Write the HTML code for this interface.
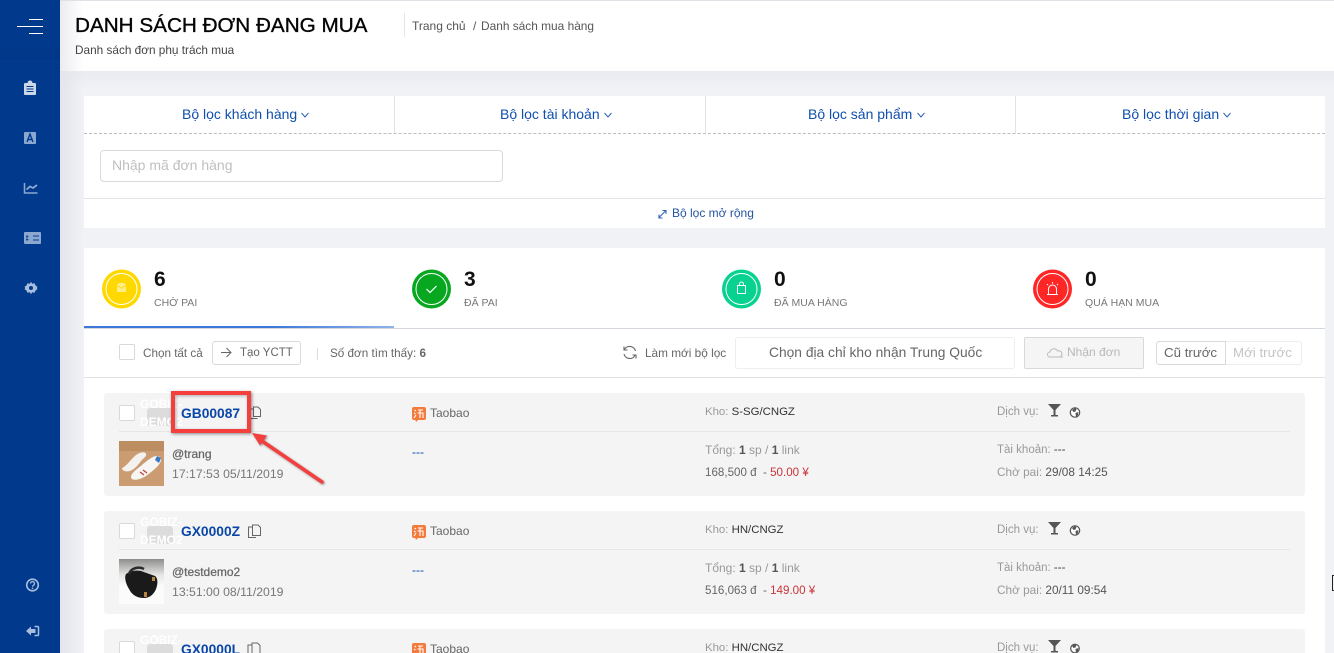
<!DOCTYPE html>
<html lang="vi"><head><meta charset="utf-8"><title>Danh sách đơn đang mua</title>
<style>
*{box-sizing:border-box}
html,body{margin:0;padding:0;width:1334px;height:653px;overflow:hidden;background:#f0f2f6;font-family:"Liberation Sans","Noto Sans CJK SC",sans-serif;font-size:12px;color:#666}
#w{position:absolute;left:0;top:0;width:1334px;height:653px;overflow:hidden;background:#f0f2f6}
.a{position:absolute;white-space:nowrap}
.box{position:absolute}
.f{color:#0f4fae;font-size:14px;text-align:center}
.lab{color:#777;font-size:10.5px}
.num{color:#111;font-size:21px;font-weight:bold}
.cb{position:absolute;width:16px;height:16px;background:#fff;border:1px solid #d9d9d9;border-radius:2px}
.card{position:absolute;left:104px;width:1201px;height:103px;background:#f4f4f4;border-radius:3px}
.code{position:absolute;color:#0a46a8;font-size:13.800px;font-weight:bold;white-space:nowrap}
.g{color:#999}.d{color:#444}
.clip{overflow:hidden}
</style></head><body><div id="w">
<div class="box" style="left:0;top:0;width:1334px;height:1px;background:#dfe1e6"></div>
<div class="box" style="left:60px;top:71px;width:1274px;height:20px;background:linear-gradient(180deg,#e9ebf0,#f0f2f6)"></div>
<div class="box" style="left:60px;top:71px;width:24px;height:582px;background:linear-gradient(90deg,#e3e5ea,rgba(240,242,246,0))"></div>
<!-- header -->
<div class="box" style="left:60px;top:1px;width:1274px;height:70px;background:#fff"></div>
<div class="box" style="left:60px;top:1px;width:24px;height:70px;background:linear-gradient(90deg,#ececef,#fff)"></div>
<div class="a" style="left:75px;top:13px;font-size:20.700px;line-height:26px;color:#050505;-webkit-text-stroke:.35px #050505">DANH SÁCH ĐƠN ĐANG MUA</div>
<div class="a" style="left:75px;top:43px;font-size:11.800px;line-height:15px;color:#444">Danh sách đơn phụ trách mua</div>
<div class="box" style="left:404px;top:13px;width:1px;height:24px;background:#e3e5ea"></div>
<div class="a" style="left:412px;top:19px;font-size:12px;line-height:15px;color:#555">Trang chủ</div>
<div class="a" style="left:473px;top:19px;font-size:12px;line-height:15px;color:#555">/</div>
<div class="a" style="left:481px;top:19px;font-size:11.900px;line-height:15px;color:#555">Danh sách mua hàng</div>
<!-- sidebar -->
<div class="box" style="left:0;top:0;width:60px;height:653px;background:#013a8d"></div>
<div class="box" style="left:0;top:40px;width:60px;height:20px;background:linear-gradient(180deg,#013a8d,#013788)"></div>
<svg class="box" style="left:0;top:0" width="60" height="653" viewBox="0 0 60 653">
<path d="M29 19.500h14M17 26.500h26M29 33.500h14" stroke="#fff" stroke-width="1" fill="none"/>
<path d="M25 83h2.500a2.500 2.500 0 0 1 5 0H35a1 1 0 0 1 1 1v10a1 1 0 0 1-1 1H25a1 1 0 0 1-1-1V84a1 1 0 0 1 1-1z" fill="#ccd8e8"/>
<path d="M26.500 86.500h7M26.500 89h7M26.500 91.500h7" stroke="#013a8d" stroke-width=".9"/>
<rect x="24" y="132" width="12" height="12" rx="1" fill="#8ca8d0"/>
<path d="M27 142l3-8 3 8M28 139.500h4" stroke="#013a8d" stroke-width="1.400" fill="none"/>
<path d="M24.500 183v10h13" stroke="#8ca8d0" stroke-width="1.500" fill="none"/>
<path d="M26.500 189.500l3.500-3 3 1.500 4-3" stroke="#8ca8d0" stroke-width="1.800" fill="none"/>
<rect x="24" y="232" width="17" height="12" rx="1" fill="#8ca8d0"/>
<path d="M33 236h6M33 240h6" stroke="#013a8d" stroke-width="1"/><path d="M27 235v6M26 236.500h2.500M26 239.500h2.500" stroke="#013a8d" stroke-width=".8"/>
<path d="M31 281.800l1.200 2 2.300-.5 1 2.200 1.900 1.200-.6 1.300.6 1.300-1.900 1.200-1 2.200-2.300-.5-1.200 2-1.200-2-2.300.5-1-2.200-1.900-1.200.6-1.300-.6-1.300 1.900-1.200 1-2.200 2.300.5z" fill="#a8bedb"/>
<circle cx="31" cy="288" r="2" fill="#013a8d"/>
<circle cx="32.500" cy="585" r="5.800" fill="none" stroke="#a8bedb" stroke-width="1.600"/>
<path d="M30.500 583.500a2 2 0 1 1 3 1.800c-.7.400-1 .8-1 1.500" stroke="#a8bedb" stroke-width="1.300" fill="none"/><circle cx="32.500" cy="588.300" r=".8" fill="#a8bedb"/>
<path d="M26 631l5-4.500v2.500h4.500v4H31v2.500z" fill="#a8bedb"/>
<path d="M34.500 626.500h3a1 1 0 0 1 1 1v7a1 1 0 0 1-1 1h-3" stroke="#a8bedb" stroke-width="1.500" fill="none"/>
</svg>
<!-- filters -->
<div class="box" style="left:84px;top:96px;width:1241px;height:132px;background:#fff"></div>
<div class="box" style="left:84px;top:133px;width:1241px;border-top:1px dashed #bdbdbd"></div>
<div class="box" style="left:394px;top:96px;width:1px;height:37px;background:#e3e3e3"></div>
<div class="box" style="left:705px;top:96px;width:1px;height:37px;background:#e3e3e3"></div>
<div class="box" style="left:1015px;top:96px;width:1px;height:37px;background:#e3e3e3"></div>
<div class="a f" style="left:182px;top:106px;line-height:16px">Bộ lọc khách hàng</div>
<div class="a f" style="left:500px;top:106px;line-height:16px">Bộ lọc tài khoản</div>
<div class="a f" style="left:808px;top:106px;line-height:16px">Bộ lọc sản phẩm</div>
<div class="a f" style="left:1122px;top:106px;line-height:16px">Bộ lọc thời gian</div>
<svg class="box" style="left:0;top:0" width="1334" height="240">
<g stroke="#2a62b5" fill="none" stroke-width="1"><path d="M301.500 113l3.500 4 3.500-4M604.500 113l3.500 4 3.500-4M917.500 113l3.500 4 3.500-4M1223.500 113l3.500 4 3.500-4"/>
<path d="M658.500 218l7-7M662.500 210.500h3.500v3.500M659 214.500v3.500h3.500"/></g></svg>
<div class="box" style="left:100px;top:150px;width:403px;height:32px;background:#fff;border:1px solid #d9d9d9;border-radius:4px"></div>
<div class="a" style="left:112px;top:157px;font-size:14px;line-height:17px;color:#bfbfbf">Nhập mã đơn hàng</div>
<div class="box" style="left:84px;top:198px;width:1241px;height:1px;background:#e3e5ea"></div>
<div class="a" style="left:672px;top:206px;font-size:12px;line-height:15px;color:#24549f">Bộ lọc mở rộng</div>
<!-- list panel -->
<div class="box" style="left:84px;top:248px;width:1241px;height:405px;background:#fff"></div>
<div class="box" style="left:84px;top:328px;width:1241px;height:1px;background:#d5d9df"></div>
<div class="box" style="left:84px;top:326px;width:310px;height:2px;background:linear-gradient(90deg,#3b78d8 60%,#8fb2e8)"></div>
<div class="box" style="left:84px;top:377px;width:1241px;height:1px;background:#e3e3e3"></div>
<svg class="box" style="left:84px;top:250px" width="1241" height="76" viewBox="84 250 1241 76">
<circle cx="121.500" cy="289" r="19.500" fill="#ffd800"/><circle cx="121.500" cy="289" r="15.500" fill="none" stroke="#fff" stroke-width="1"/>
<path d="M117 286l1.500-3h6l1.500 3v6h-9z" fill="#fff" opacity=".55"/><path d="M117 286.500h2.500l1 1.500h2l1-1.500h2.500" stroke="#ffd800" fill="none" stroke-width=".8"/>
<circle cx="431.500" cy="289" r="19.500" fill="#07a820"/><circle cx="431.500" cy="289" r="15.500" fill="none" stroke="#fff" stroke-width="1"/>
<path d="M426.500 289l3.500 3.500 6.500-6.500" stroke="#fff" fill="none" stroke-width="1.200"/>
<circle cx="741.500" cy="289" r="19.500" fill="#07d28f"/><circle cx="741.500" cy="289" r="15.500" fill="none" stroke="#fff" stroke-width="1"/>
<rect x="737.500" y="285.500" width="8" height="8" fill="none" stroke="#fff" stroke-width="1"/><path d="M739.500 285.500v-1.500a2 2 0 0 1 4 0v1.500" stroke="#fff" fill="none"/>
<circle cx="1052.500" cy="289" r="19.500" fill="#ff2626"/><circle cx="1052.500" cy="289" r="15.500" fill="none" stroke="#fff" stroke-width="1"/>
<path d="M1048.500 294v-5a4 4 0 0 1 8 0v5M1047 294.500h11M1052.500 282v1.500M1047 284l1 1M1058 284l-1 1" stroke="#fff" fill="none" stroke-width="1"/>
</svg>
<div class="a num" style="left:154px;top:268px;line-height:24px">6</div>
<div class="a lab" style="left:154px;top:296px;line-height:14px">CHỜ PAI</div>
<div class="a num" style="left:464px;top:268px;line-height:24px">3</div>
<div class="a lab" style="left:464px;top:296px;line-height:14px">ĐÃ PAI</div>
<div class="a num" style="left:774px;top:268px;line-height:24px">0</div>
<div class="a lab" style="left:774px;top:296px;line-height:14px">ĐÃ MUA HÀNG</div>
<div class="a num" style="left:1085px;top:268px;line-height:24px">0</div>
<div class="a lab" style="left:1085px;top:296px;line-height:14px">QUÁ HẠN MUA</div>
<!-- toolbar -->
<div class="cb" style="left:119px;top:344px"></div>
<div class="a" style="left:143px;top:346px;font-size:11.700px;line-height:15px;color:#666">Chọn tất cả</div>
<div class="box" style="left:212px;top:341px;width:89px;height:24px;border:1px solid #d9d9d9;border-radius:3px;background:#fff"></div>
<svg class="box" style="left:220px;top:346px" width="14" height="14"><path d="M1 6.500h10M6.500 2l4.500 4.500L6.500 11" stroke="#666" fill="none"/></svg>
<div class="a" style="left:240px;top:346px;font-size:11.500px;line-height:14px;color:#666">Tạo YCTT</div>
<div class="box" style="left:317px;top:348px;width:1px;height:12px;background:#ddd"></div>
<div class="a" style="left:330px;top:346px;font-size:11.700px;line-height:15px;color:#666">Số đơn tìm thấy: <b>6</b></div>
<svg class="box" style="left:622px;top:345px" width="16" height="15"><path d="M13.500 6A6 6 0 0 0 2.500 4.500M2 9a6 6 0 0 0 11 1.500M2 1.500v3.500h3.500M14 13.500V10h-3.500" stroke="#666" fill="none" stroke-width="1.100"/></svg>
<div class="a" style="left:645px;top:346px;font-size:11.800px;line-height:15px;color:#666">Làm mới bộ lọc</div>
<div class="box" style="left:735px;top:337px;width:280px;height:32px;border:1px solid #eee;border-radius:3px;background:#fff"></div>
<div class="a" style="left:769px;top:344px;font-size:13.800px;line-height:17px;color:#666">Chọn địa chỉ kho nhận Trung Quốc</div>
<div class="box" style="left:1024px;top:337px;width:120px;height:32px;border:1px solid #d9d9d9;border-radius:2px;background:#f5f5f5"></div>
<svg class="box" style="left:1047px;top:347px" width="18" height="12"><path d="M3 10a2.500 2.500 0 0 1 0-5 4 4 0 0 1 7.500-1A3 3 0 0 1 13 10zM13 10h3" stroke="#bbb" fill="none"/></svg>
<div class="a" style="left:1067px;top:345px;font-size:12px;line-height:15px;color:#b8b8b8">Nhận đơn</div>
<div class="box" style="left:1156px;top:341px;width:70px;height:24px;border:1px solid #d9d9d9;border-radius:3px 0 0 3px;background:#fff"></div>
<div class="box" style="left:1226px;top:341px;width:76px;height:24px;border:1px solid #eee;border-left:0;border-radius:0 3px 3px 0;background:#fff"></div>
<div class="a" style="left:1164px;top:345px;font-size:13.300px;line-height:15px;color:#666">Cũ trước</div>
<div class="a" style="left:1233px;top:345px;font-size:13.300px;line-height:15px;color:#c4c4c4">Mới trước</div>
<!-- cards -->
<div class="card" style="top:393px"></div>
<div class="card" style="top:511px"></div>
<div class="card" style="top:629px;height:24px;border-radius:3px 3px 0 0"></div>
<div class="box" style="left:119px;top:431px;width:1171px;height:1px;background:#e6e6e6"></div>
<div class="box" style="left:119px;top:549px;width:1171px;height:1px;background:#e6e6e6"></div>
<div class="cb" style="left:119px;top:405px"></div>
<div class="box" style="left:147px;top:408px;width:26px;height:18px;background:#dcdcdc;border-radius:3px"></div>
<div class="a" style="left:140px;top:396px;font-size:12px;line-height:17px;color:#fff;font-weight:bold">GOBIZ-</div>
<div class="a" style="left:140px;top:414px;font-size:12px;line-height:17px;color:#fff;font-weight:bold">DEMO2</div>
<div class="code" style="left:181px;top:405px;line-height:17px">GB00087</div>
<div class="cb" style="left:119px;top:523px"></div>
<div class="box" style="left:147px;top:526px;width:26px;height:18px;background:#dcdcdc;border-radius:3px"></div>
<div class="a" style="left:140px;top:514px;font-size:12px;line-height:17px;color:#fff;font-weight:bold">GOBIZ-</div>
<div class="a" style="left:140px;top:532px;font-size:12px;line-height:17px;color:#fff;font-weight:bold">DEMO2</div>
<div class="code" style="left:181px;top:523px;line-height:17px">GX0000Z</div>
<div class="cb" style="left:119px;top:641px;height:12px;border-bottom:0;border-radius:2px 2px 0 0"></div>
<div class="box" style="left:147px;top:644px;width:26px;height:9px;background:#dcdcdc;border-radius:3px 3px 0 0"></div>
<div class="a" style="left:140px;top:632px;font-size:12px;line-height:17px;color:#fff;font-weight:bold">GOBIZ-</div>
<div class="code clip" style="left:181px;top:641px;height:12px;line-height:17px">GX0000L</div>
<svg class="box" style="left:0;top:0" width="1334" height="653">
<g fill="none" stroke="#666" stroke-width="1">
<path d="M253.500 409h-3v9.500h7M253.500 407h4.500l2.500 2.500v7h-7z"/>
<path d="M252.500 527h-4v10.500h7.500M252.500 525h5.500l2.500 2.500v8h-8z"/>
<path d="M252 645h-4v9h7M252 643h5.500l2.500 2.500v8h-8z"/>
</g>
<g fill="#f47a3c"><rect x="412" y="407" width="14" height="13" rx="2"/><path d="M415 419h4l-3 3z"/>
<rect x="412" y="525" width="14" height="13" rx="2"/><path d="M415 537h4l-3 3z"/>
<rect x="412" y="643" width="14" height="13" rx="2"/></g>
<g stroke="#fff" fill="none" stroke-width="1.100"><path d="M414.500 410l1.500 1M414 413l1.500 1M414 418l2-3M418 410h5M417.500 413h6M420 410v8M423 413v5"/>
<path d="M414.500 528l1.500 1M414 531l1.500 1M414 536l2-3M418 528h5M417.500 531h6M420 528v8M423 531v5"/>
<path d="M414.500 646l1.500 1M414 649l1.500 1M418 646h5M417.500 649h6M420 646v7M423 649v4"/></g>
<g fill="#555"><path d="M1048 404h13l-5.500 6v5h2.500v1.500h-7V415h2.500v-5z"/><path d="M1048 522h13l-5.500 6v5h2.500v1.500h-7V533h2.500v-5z"/><path d="M1048 640h13l-5.500 6v5h2.500v1.500h-7V651h2.500v-5z"/></g>
<g fill="#fff" stroke="#555" stroke-width="1.200"><circle cx="1075" cy="412.500" r="4.700"/><circle cx="1075" cy="530.500" r="4.700"/><circle cx="1075" cy="648.500" r="4.300"/></g>
<g fill="#555"><path d="M1072 410l3-2 1.500 1-1 2.500-2 .5zM1075.500 413l3-1-.5 3-2 2zM1072 528l3-2 1.500 1-1 2.500-2 .5zM1075.500 531l3-1-.5 3-2 2zM1072 646l3-2 1.500 1-1 2.500-2 .5zM1075.500 649l3-1-.5 3-2 2z"/></g>
</svg>
<div class="a" style="left:430px;top:406px;font-size:12px;line-height:15px;color:#666">Taobao</div>
<div class="a" style="left:430px;top:524px;font-size:12px;line-height:15px;color:#666">Taobao</div>
<div class="a clip" style="left:430px;top:642px;height:11px;font-size:12px;line-height:15px;color:#666">Taobao</div>
<!-- thumbs -->
<svg class="box" style="left:119px;top:441px" width="45" height="45" viewBox="0 0 45 45">
<rect width="45" height="45" fill="#cb9c72"/><rect width="45" height="10" fill="#bd8d62"/>
<path d="M3 27c4-1 9-9 14-13 4-3 9-4 10-1 1 2-2 4-5 7-3 4-6 8-11 10-4 1-8 0-8-3z" fill="#f3f2ef"/>
<path d="M12 35c2-5 8-8 12-12 5-4 11-9 15-8 3 1 4 4 2 7-3 5-9 9-14 13-5 3-11 5-14 3-1-1-1-2-1-3z" fill="#f7f6f3"/>
<path d="M38 15l4 2-2 5-4-3z" fill="#3b78c8"/><path d="M24 29l4 3M21 31l4 3" stroke="#c2403d" stroke-width="1.300"/>
</svg>
<svg class="box" style="left:119px;top:559px" width="45" height="45" viewBox="0 0 45 45">
<defs><linearGradient id="bg" x1="0" y1="0" x2="0" y2="1"><stop offset="0" stop-color="#8d8d8b"/><stop offset=".35" stop-color="#e4e4e2"/><stop offset=".6" stop-color="#fbfbfb"/></linearGradient></defs>
<rect width="45" height="45" fill="url(#bg)"/>
<path d="M7 15c4-3 10-4 15-3l14 5c3 2 3 8 1 13-2 5-6 9-12 9-7 0-12-3-15-9-3-5-5-11-3-15z" fill="#1b1a1a"/>
<path d="M10 15c2-6 10-8 15-5" stroke="#2b2b2b" stroke-width="2.500" fill="none"/>
<rect x="25" y="33" width="3" height="5" fill="#b78442"/><rect x="33" y="18" width="3" height="4" fill="#b78442"/>
</svg>
<!-- user -->
<div class="a" style="left:172px;top:447px;font-size:12px;line-height:15px;color:#666;-webkit-text-stroke:.25px #666">@trang</div>
<div class="a" style="left:172px;top:467px;font-size:12.250px;line-height:15px;color:#777">17:17:53 05/11/2019</div>
<div class="a" style="left:172px;top:565px;font-size:12px;line-height:15px;color:#666;-webkit-text-stroke:.25px #666">@testdemo2</div>
<div class="a" style="left:172px;top:585px;font-size:12.250px;line-height:15px;color:#777">13:51:00 08/11/2019</div>
<div class="a" style="left:412px;top:445px;font-size:12px;line-height:15px;color:#0a46a8">---</div>
<div class="a" style="left:412px;top:563px;font-size:12px;line-height:15px;color:#0a46a8">---</div>
<!-- kho -->
<div class="a g" style="left:705px;top:405px;font-size:11.400px;line-height:15px">Kho: <span style="color:#333">S-SG/CNGZ</span></div>
<div class="a g" style="left:705px;top:523px;font-size:11.400px;line-height:15px">Kho: <span style="color:#333">HN/CNGZ</span></div>
<div class="a g clip" style="left:705px;top:641px;height:12px;font-size:11.400px;line-height:15px">Kho: <span style="color:#333">HN/CNGZ</span></div>
<div class="a g" style="left:705px;top:443px;font-size:12px;line-height:15px">Tổng: <b style="color:#555">1</b> sp / <b style="color:#555">1</b> link</div>
<div class="a d" style="left:705px;top:465px;font-size:11.600px;line-height:15px;color:#666">168,500 đ&nbsp; - <span style="color:#c9343a">50.00 ¥</span></div>
<div class="a g" style="left:705px;top:561px;font-size:12px;line-height:15px">Tổng: <b style="color:#555">1</b> sp / <b style="color:#555">1</b> link</div>
<div class="a d" style="left:705px;top:583px;font-size:11.600px;line-height:15px;color:#666">516,063 đ&nbsp; - <span style="color:#c9343a">149.00 ¥</span></div>
<!-- right col -->
<div class="a g" style="left:997px;top:405px;font-size:11.500px;line-height:15px">Dịch vụ:</div>
<div class="a g" style="left:997px;top:523px;font-size:11.500px;line-height:15px">Dịch vụ:</div>
<div class="a g clip" style="left:997px;top:641px;height:12px;font-size:11.500px;line-height:15px">Dịch vụ:</div>
<div class="a g" style="left:997px;top:443px;font-size:11.500px;line-height:15px">Tài khoản: <span style="color:#444">---</span></div>
<div class="a g" style="left:997px;top:465px;font-size:11.800px;line-height:15px">Chờ pai: <span style="color:#555">29/08 14:25</span></div>
<div class="a g" style="left:997px;top:561px;font-size:11.500px;line-height:15px">Tài khoản: <span style="color:#444">---</span></div>
<div class="a g" style="left:997px;top:583px;font-size:11.800px;line-height:15px">Chờ pai: <span style="color:#555">20/11 09:54</span></div>
<!-- annotation -->
<div class="box" style="left:171px;top:391px;width:80px;height:42px;border:4px solid #f43f3f;box-shadow:1px 1px 3px rgba(0,0,0,.45),inset 1px 1px 3px rgba(0,0,0,.3)"></div>
<svg class="box" style="left:245px;top:425px;filter:drop-shadow(1px 1px 1px rgba(0,0,0,.4))" width="85" height="65" viewBox="245 425 85 65">
<path d="M322 482L262 441" stroke="#f43f3f" stroke-width="3.600" stroke-linecap="round"/>
<path d="M252 433l15 2.500-7 10z" fill="#f43f3f"/>
</svg>
<div class="box" style="left:1332px;top:575px;width:2px;height:16px;border-left:1px solid #222;border-top:1px solid #222;border-bottom:1px solid #222"></div>
</div></body></html>
